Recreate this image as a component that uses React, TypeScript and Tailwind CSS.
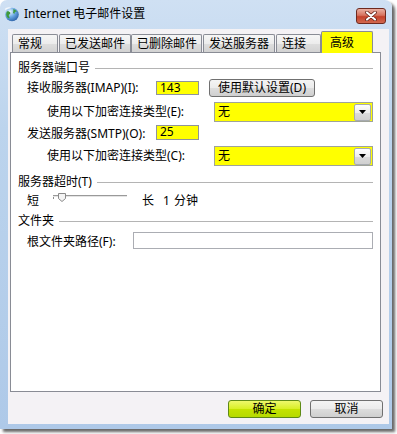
import React from "react";

function Globe() {
  return (
    <svg width="16" height="16" viewBox="0 0 16 16">
      <defs>
        <radialGradient id="gl" cx="0.35" cy="0.3" r="0.85">
          <stop offset="0" stopColor="#eef7ff" />
          <stop offset="0.45" stopColor="#6aa8e2" />
          <stop offset="1" stopColor="#1c4f98" />
        </radialGradient>
      </defs>
      <circle cx="8" cy="8.5" r="6.8" fill="url(#gl)" />
      <path d="M3.2 5.2c1.4-.3 2.4.4 3 1.2.5.8-.2 1.7-1 2.2-.7.5-.4 1.6.2 2.4.5.7-.2 1.6-1 1.3-1.4-.8-2.3-2.6-2.2-4.3 0-1 .3-2 1-2.8z" fill="#3f9a3a" />
      <path d="M9.5 3.2c1.2.2 2.6 1 3.3 2.2-.6.3-1.4.1-1.9.6-.4.4.1 1.1-.3 1.5-.5.4-1.3-.2-1.500-.8-.3-.9.7-1.4.3-2.2-.2-.5-.5-.9.1-1.300z" fill="#3f9a3a" />
      <path d="M1 3.5c1.5-1.5 3.5-2 5.5-1.5" stroke="#ffffff" strokeWidth="1.2" fill="none" opacity="0.8" />
    </svg>
  );
}

function CloseX() {
  return (
    <svg width="12" height="10" viewBox="0 0 12 10">
      <path d="M2 1.5L10 8.5M10 1.5L2 8.5" stroke="#5a1a10" strokeWidth="3.6" strokeLinecap="round" />
      <path d="M2 1.5L10 8.5M10 1.5L2 8.5" stroke="#ffffff" strokeWidth="2.2" strokeLinecap="round" />
    </svg>
  );
}

function Header({ text }: { text: string }) {
  return (
    <div className="flex items-center h-[14px]">
      <span className="text-[12px] leading-[14px] whitespace-nowrap">{text}</span>
      <div className="flex-1 ml-[5px] h-px bg-[#b4b4b4]" />
    </div>
  );
}

function Combo() {
  return (
    <div className="flex-1 h-full bg-[#ffff00] border border-[#9fa39a] flex items-center">
      <span className="pl-[3px] leading-[14px] flex-1">无</span>
      <div className="w-[17px] h-[17px] mr-px border border-[#a7abb0] rounded-[2px] bg-[linear-gradient(to_bottom,#ffffff,#eeeeee_50%,#dcdcdc_51%,#d0d0d0)] flex items-center justify-center">
        <svg width="7" height="4" viewBox="0 0 7 4">
          <path d="M0 0H7L3.5 4Z" fill="#000000" />
        </svg>
      </div>
    </div>
  );
}

function Slider() {
  return (
    <svg width="80" height="14" viewBox="0 0 80 14" className="block">
      <line x1="0.5" y1="3" x2="0.5" y2="7" stroke="#8c8c8c" strokeWidth="1" />
      <line x1="0" y1="3.5" x2="74" y2="3.5" stroke="#9a9a9a" strokeWidth="1" />
      <line x1="0" y1="4.5" x2="74" y2="4.5" stroke="#e4e4e4" strokeWidth="1" />
      <path d="M5.5 1.5H12.5V6.5L9 9.5L5.5 6.5Z" fill="#f4f4f4" stroke="#8a8a8a" strokeWidth="1" />
    </svg>
  );
}

const tabBase =
  "h-[18px] border border-b-0 border-[#898c95] rounded-t-[2px] bg-[linear-gradient(to_bottom,#f6f6f6,#ececec_50%,#dedede_51%,#d2d2d2)] flex items-center leading-[14px] whitespace-nowrap";

export default function App() {
  return (
    <div className="w-[397px] h-[434px] bg-white overflow-hidden font-['Noto_Sans','Noto_Sans_CJK_SC',sans-serif] text-[12px] text-black">
      <div className="w-[392px] h-[429px] rounded-t-[7px] bg-[linear-gradient(to_bottom,#cfe0f3,#bcd4ed_30%,#aec9e8)] shadow-[3px_3px_3px_rgba(0,0,0,0.6)] flex flex-col">
        {/* Title bar */}
        <div className="h-[29px] flex items-start">
          <div className="ml-[4px] mt-[6px] w-[16px] h-[16px]">
            <Globe />
          </div>
          <div className="ml-[4px] mt-[6px] leading-[16px] text-[12px] whitespace-nowrap">
            Internet 电子邮件设置
          </div>
          <div className="ml-auto mr-[6px] mt-[8px] w-[30px] h-[16px] rounded-[3px] border border-[#6e2a1f] bg-[linear-gradient(to_bottom,#eab0a2,#d7735e_45%,#c4412a_55%,#d2694f)] flex items-center justify-center">
            <CloseX />
          </div>
        </div>

        {/* Client area */}
        <div className="ml-[8px] w-[381px] h-[395px] bg-[#f4f2f5] flex flex-col">
          {/* Tabs */}
          <div className="h-[23px] flex items-end pl-[4px]">
            <div className={`${tabBase} w-[46px] pl-[5px]`}>常规</div>
            <div className={`${tabBase} w-[72px] ml-[1px] pl-[5px]`}>已发送邮件</div>
            <div className={`${tabBase} w-[71px] pl-[5px]`}>已删除邮件</div>
            <div className={`${tabBase} w-[72px] ml-[1px] pl-[5px]`}>发送服务器</div>
            <div className={`${tabBase} w-[45px] ml-[1px] pl-[5px]`}>连接</div>
            <div className="relative top-[1px] z-10 w-[52px] h-[22px] border border-b-0 border-[#898c95] rounded-t-[2px] bg-[#ffff00] flex items-center pl-[8px] leading-[14px] whitespace-nowrap">
              高级
            </div>
          </div>

          {/* Panel */}
          <div className="ml-[2px] w-[371px] h-[340px] bg-white border border-[#898c95] flex flex-col pt-[8px] pl-[7px] pr-[7px]">
            <Header text="服务器端口号" />

            <div className="mt-[4px] h-[18px] flex items-center pl-[9px]">
              <span className="w-[129px] leading-[14px] whitespace-nowrap">接收服务器(IMAP)(I):</span>
              <div className="w-[43px] h-[14px] bg-[#ffff00] border border-[#8f949b] flex items-center">
                <span className="pl-[3px] leading-[12px]">143</span>
              </div>
              <div className="ml-[10px] w-[106px] h-[18px] rounded-[3px] border border-[#707070] bg-[linear-gradient(to_bottom,#f4f4f4,#ebebeb_50%,#dddddd_51%,#cfcfcf)] flex items-center justify-center leading-[14px] whitespace-nowrap">
                使用默认设置(D)
              </div>
            </div>

            <div className="mt-[5px] h-[20px] flex items-center pl-[29px]">
              <span className="w-[167px] leading-[14px] whitespace-nowrap">使用以下加密连接类型(E):</span>
              <Combo />
            </div>

            <div className="mt-[2px] h-[16px] flex items-center pl-[9px]">
              <span className="w-[129px] leading-[14px] whitespace-nowrap mt-[3px]">发送服务器(SMTP)(O):</span>
              <div className="w-[43px] h-[15px] bg-[#ffff00] border border-[#8f949b] flex items-center">
                <span className="pl-[3px] leading-[12px]">25</span>
              </div>
            </div>

            <div className="mt-[6px] h-[20px] flex items-center pl-[29px]">
              <span className="w-[167px] leading-[14px] whitespace-nowrap">使用以下加密连接类型(C):</span>
              <Combo />
            </div>

            <div className="mt-[9px]">
              <Header text="服务器超时(T)" />
            </div>

            <div className="mt-[4px] h-[16px] flex items-center pl-[9px]">
              <span className="w-[12px] leading-[14px]">短</span>
              <div className="ml-[14px] -mt-[5px]">
                <Slider />
              </div>
              <span className="ml-[9px] leading-[14px]">长</span>
              <span className="ml-[9px] leading-[14px]">1</span>
              <span className="ml-[4px] leading-[14px] whitespace-nowrap">分钟</span>
            </div>

            <div className="mt-[5px]">
              <Header text="文件夹" />
            </div>

            <div className="mt-[4px] h-[17px] flex items-center pl-[9px]">
              <span className="w-[106px] leading-[14px] whitespace-nowrap mt-[2px]">根文件夹路径(F):</span>
              <div className="flex-1 h-[17px] bg-white border border-[#abadb3]" />
            </div>
          </div>

          {/* Buttons */}
          <div className="mt-[8px] flex justify-end gap-[9px] pr-[6px]">
            <div className="w-[73px] h-[18px] rounded-[3px] border border-[#5f8a16] bg-[linear-gradient(to_bottom,#eef86c,#d8ef24_50%,#c4e300_51%,#b6da00)] flex items-center justify-center leading-[14px]">
              确定
            </div>
            <div className="w-[73px] h-[18px] rounded-[3px] border border-[#707070] bg-[linear-gradient(to_bottom,#f4f4f4,#ebebeb_50%,#dddddd_51%,#cfcfcf)] flex items-center justify-center leading-[14px]">
              取消
            </div>
          </div>
        </div>
      </div>
    </div>
  );
}
